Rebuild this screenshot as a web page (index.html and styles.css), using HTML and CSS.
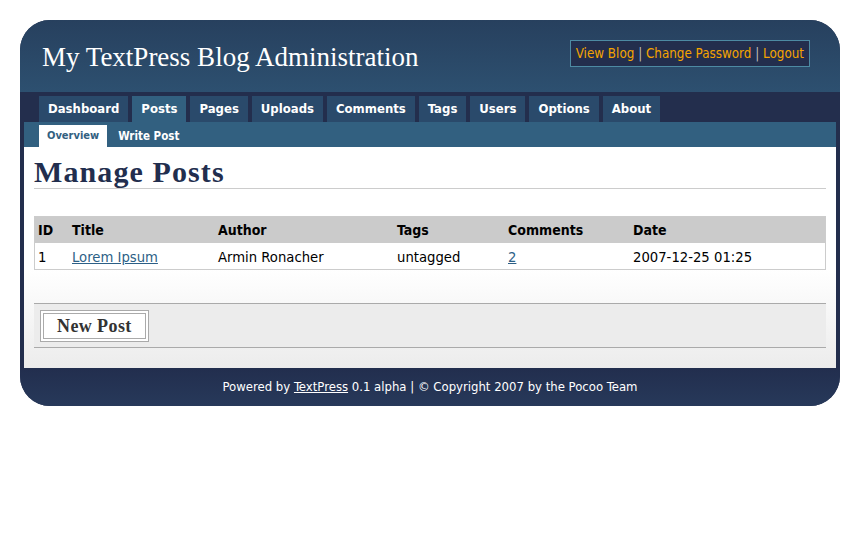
FILE: index.html
```html
<!DOCTYPE html>
<html>
<head>
<meta charset="utf-8">
<title>TextPress Admin</title>
<link rel="stylesheet" href="styles.css">
</head>
<body>
<div class="frame">
  <div class="header">
    <h1 class="site-title">My TextPress Blog Administration</h1>
    <div class="toplinks">
      <a href="#">View Blog</a> <span class="sep">|</span> <a href="#">Change Password</a> <span class="sep">|</span> <a href="#">Logout</a>
    </div>
  </div>
  <ul class="nav">
    <li><a href="#">Dashboard</a></li>
    <li class="active"><a href="#">Posts</a></li>
    <li><a href="#">Pages</a></li>
    <li><a href="#">Uploads</a></li>
    <li><a href="#">Comments</a></li>
    <li><a href="#">Tags</a></li>
    <li><a href="#">Users</a></li>
    <li><a href="#">Options</a></li>
    <li><a href="#">About</a></li>
  </ul>
  <div class="inner">
    <ul class="subnav">
      <li class="active"><a href="#">Overview</a></li>
      <li><a href="#">Write Post</a></li>
    </ul>
    <div class="content">
      <h2 class="page-title">Manage Posts</h2>
      <table class="posts">
        <thead>
          <tr><th class="c-id">ID</th><th class="c-title">Title</th><th class="c-author">Author</th><th class="c-tags">Tags</th><th class="c-comments">Comments</th><th>Date</th></tr>
        </thead>
        <tbody>
          <tr><td>1</td><td><a href="#">Lorem Ipsum</a></td><td>Armin Ronacher</td><td>untagged</td><td><a href="#">2</a></td><td>2007-12-25 01:25</td></tr>
        </tbody>
      </table>
      <div class="actions">
        <button class="btn" type="button">New Post</button>
      </div>
    </div>
  </div>
  <div class="footer">
    Powered by <a href="#">TextPress</a> 0.1 alpha | © Copyright 2007 by the Pocoo Team
  </div>
</div>
</body>
</html>
```
FILE: styles.css
```css
html, body {
  margin: 0;
  padding: 0;
  background: #fff;
}
body {
  font-family: "DejaVu Sans Condensed", "DejaVu Sans", sans-serif;
  font-size: 14px;
  color: #000;
}
.frame {
  width: 820px;
  margin: 20px 0 0 20px;
  background: #232e4d;
  border-radius: 30px;
}
.header {
  height: 72px;
  border-radius: 30px 30px 0 0;
  background: linear-gradient(#27405e, #2d5070);
  display: flex;
  justify-content: space-between;
  align-items: flex-start;
  padding: 0 30px 0 22px;
}
.site-title {
  margin: 22px 0 0 0;
  font-family: "Liberation Serif", serif;
  font-weight: normal;
  font-size: 27px;
  color: #fff;
  line-height: 30px;
}
.toplinks {
  margin-top: 20px;
  border: 1px solid #4d8aa3;
  background: #232e4d;
  padding: 0 5px;
  height: 25px;
  line-height: 25px;
  font-size: 13.3px;
  color: #bbb;
}
.toplinks a {
  color: #f4a400;
  text-decoration: none;
}
.nav {
  list-style: none;
  margin: 0;
  padding: 4px 0 0 19px;
  height: 26px;
  display: flex;
  gap: 4px;
}
.nav li a {
  display: block;
  height: 26px;
  line-height: 26px;
  padding: 0 9px;
  background: #2a4a6b;
  color: #fff;
  font-weight: bold;
  font-size: 13px;
  text-decoration: none;
}
.nav li.active a {
  background: #326080;
}
.inner {
  margin: 0 4px;
}
.subnav {
  list-style: none;
  margin: 0;
  padding: 3px 0 0 15px;
  height: 22px;
  background: #326080;
  display: flex;
}
.subnav li a {
  display: block;
  height: 22px;
  line-height: 22px;
  padding: 0 8px 0 11px;
  color: #fff;
  font-weight: bold;
  font-size: 11.5px;
  text-decoration: none;
}
.subnav li.active a {
  background: #fff;
  color: #326080;
  font-size: 11px;
  padding: 0 8px;
}
.content {
  background: linear-gradient(#fff 0%, #fff 55%, #ececec 100%);
  padding: 10px 10px 20px 10px;
}
.page-title {
  margin: 0 0 27px 0;
  font-family: "Liberation Serif", serif;
  font-size: 30px;
  letter-spacing: 1.1px;
  color: #222e4e;
  border-bottom: 1px solid #ccc;
  line-height: 30px;
  padding-bottom: 1px;
}
.posts {
  width: 100%;
  border-collapse: collapse;
  border: 1px solid #ccc;
  margin-bottom: 33px;
}
.posts th {
  background: #cbcbcb;
  text-align: left;
  font-weight: bold;
  height: 26px;
  padding: 0 4px 0 3px;
}
.posts td {
  background: #fff;
  height: 26px;
  padding: 0 4px 0 3px;
  font-size: 14.7px;
}
.posts a {
  color: #2c5f86;
}
.c-id { width: 27px; }
.c-title { width: 139px; }
.c-author { width: 172px; }
.c-tags { width: 104px; }
.c-comments { width: 118px; }
.actions {
  background: #ececec;
  border-top: 1px solid #aaa;
  border-bottom: 1px solid #aaa;
  padding: 6px 6px 5px 6px;
}
.btn {
  display: block;
  border: 4px double #aaa;
  background: #fff;
  font-family: "Liberation Serif", serif;
  font-weight: bold;
  font-size: 18px;
  letter-spacing: 0.4px;
  color: #333;
  padding: 0 13px;
  height: 32px;
}
.footer {
  height: 38px;
  line-height: 37px;
  text-align: center;
  color: #fff;
  font-size: 13px;
  border-radius: 0 0 30px 30px;
  background: linear-gradient(#222e4e, #27395a);
}
.footer a {
  color: #fff;
}
```
